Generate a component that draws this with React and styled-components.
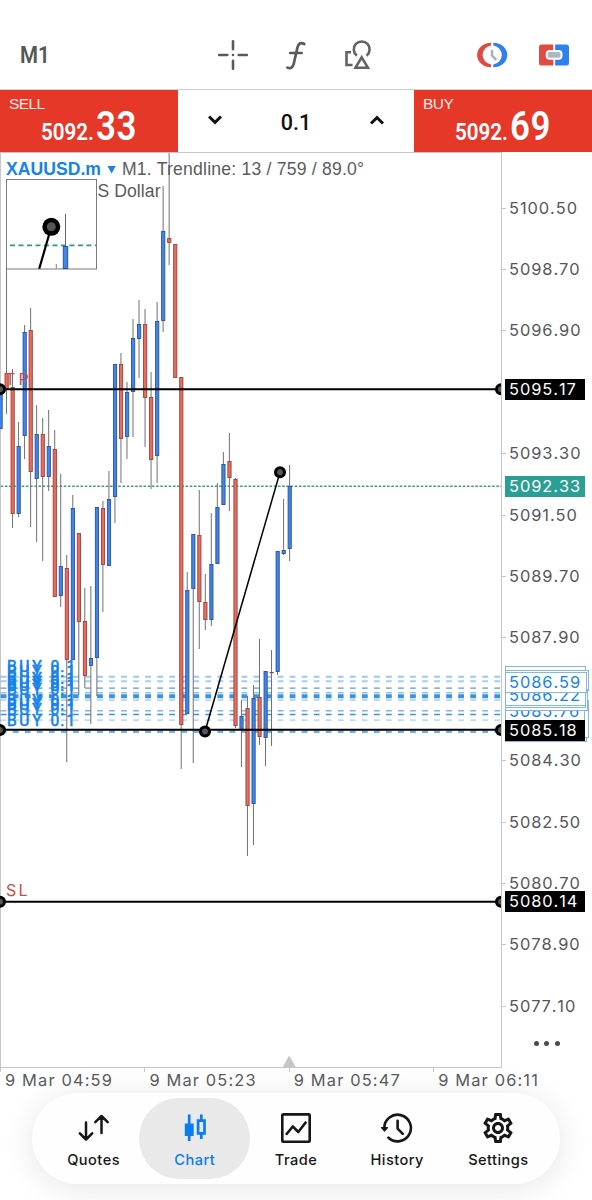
import React from "react";
import styled, { createGlobalStyle } from "styled-components";
import { MdOutlineSettings } from "react-icons/md";

const Global = createGlobalStyle`
  * { box-sizing: border-box; }
  body { margin: 0; background: #fff; }
`;

const Screen = styled.div`
  width: 592px;
  height: 1200px;
  overflow: hidden;
  display: flex;
  flex-direction: column;
  background: #fff;
  font-family: Inter, "Liberation Sans", sans-serif;
`;

/* ---------- toolbar ---------- */
const Toolbar = styled.header`
  height: 90px;
  flex: none;
  display: flex;
  align-items: center;
  padding: 20px 21px 0 20px;
  border-bottom: 1px solid #cfcfcf;
`;
const Timeframe = styled.div`
  width: 196px;
  font: 600 24.5px/30px Roboto, sans-serif;
  color: #555;
  transform: scaleX(0.84);
  transform-origin: left;
`;
const ToolGroup = styled.div`
  display: flex;
  align-items: center;
  gap: ${(p) => p.$gap}px;
  margin-left: ${(p) => p.$left || 0}px;
  svg { display: block; }
`;

/* ---------- one-click trading ---------- */
const TradePanel = styled.section`
  height: 62px;
  flex: none;
  display: flex;
`;
const QuoteButton = styled.div`
  width: 178px;
  padding: 5px 0 0 9px;
  background: #e53829;
  color: #fff;
`;
const Side = styled.div`
  font: 15.4px/18px "Liberation Sans", sans-serif;
  letter-spacing: -0.5px;
  color: #ffe9e4;
`;
const Price = styled.div`
  display: flex;
  align-items: baseline;
  height: 36px;
  margin-top: -8px;
  padding-left: 32px;
  font-family: Roboto, sans-serif;
  font-weight: 600;
`;
const PriceMain = styled.span`
  width: 54.5px;
  font-size: 23.8px;
  line-height: 42px;
  transform: scaleX(0.865);
  transform-origin: left;
  white-space: nowrap;
`;
const PricePips = styled.span`
  font-size: 41.5px;
  line-height: 42px;
  letter-spacing: 0.6px;
  transform: scaleX(0.84);
  transform-origin: left;
`;
const Volume = styled.div`
  flex: 1;
  display: flex;
  align-items: center;
  justify-content: space-between;
  padding: 0 28px 0 28px;
  font: 500 21.5px/30px Roboto, sans-serif;
  color: #111;
  span { margin-top: 3px; }
`;

/* ---------- chart ---------- */
const ChartArea = styled.main`
  height: 916px;
  flex: none;
  display: flex;
`;
const Plot = styled.svg`
  display: block;
  flex: none;
  border-top: 1px solid #c6c6c8;
  border-right: 1px solid #c6c6c8;
  border-bottom: 1px solid #c6c6c8;
`;
const PriceAxis = styled.div`
  position: relative;
  flex: 1;
  padding-top: 25.6px;
  font-size: 16.4px;
  letter-spacing: 0.95px;
  font-kerning: none;
`;
const AxisPrice = styled.div`
  height: 61.4px;
  display: flex;
  align-items: flex-start;
  line-height: 61.4px;
  color: #55565a;
  visibility: ${(p) => (p.$covered ? "hidden" : "visible")};
  &::before {
    content: "";
    width: 4px;
    height: 1px;
    margin: 30px 3px 0 0;
    background: #c6c6c8;
  }
`;
const Tag = styled.div`
  position: absolute;
  left: 3px;
  top: ${(p) => p.$top}px;
  width: ${(p) => p.$w || 80}px;
  height: ${(p) => p.$h || 21}px;
  padding-left: ${(p) => (p.$outline ? 3 : 4)}px;
  line-height: ${(p) => (p.$outline ? 19 : 21)}px;
  color: ${(p) => p.$fg || "#fff"};
  background: ${(p) => p.$bg || (p.$outline ? "#fff" : "#000")};
  border: ${(p) => (p.$outline ? "1px solid #83b9dd" : "0")};
`;
const More = styled.div`
  position: absolute;
  left: 32px;
  top: 888.5px;
  display: flex;
  gap: 5.4px;
  i { width: 5px; height: 5px; border-radius: 50%; background: #4b4b4d; }
`;

const TimeAxis = styled.div`
  height: 24px;
  flex: none;
  display: flex;
`;
const TimeMark = styled.div`
  width: 144.4px;
  flex: none;
  display: flex;
  font-size: 16.4px;
  line-height: 25px;
  letter-spacing: 1.15px;
  font-kerning: none;
  white-space: nowrap;
  color: #5a5b5f;
  &::before {
    content: "";
    width: 1px;
    height: 4px;
    margin-right: 4px;
    background: #c6c6c8;
  }
`;

/* ---------- tab bar ---------- */
const TabBar = styled.nav`
  width: 528px;
  height: 91px;
  flex: none;
  margin: 1px 0 0 32px;
  padding: 5px 11px 5px;
  display: flex;
  border-radius: 46px;
  background: #fefefe;
  box-shadow: 0 4px 32px rgba(0, 0, 0, 0.1);
`;
const Tab = styled.div`
  flex: none;
  width: ${(p) => (p.$active ? 111 : 101.2)}px;
  margin: ${(p) => (p.$active ? "0 -4.9px" : 0)};
  padding-top: 15px;
  display: flex;
  flex-direction: column;
  align-items: center;
  border-radius: 40px;
  background: ${(p) => (p.$active ? "#e9e9ea" : "transparent")};
  color: ${(p) => (p.$active ? "#0a7cf0" : "#161616")};
  svg { display: block; flex: none; }
`;
const TabLabel = styled.span`
  margin-top: 8px;
  font-size: 14.6px;
  line-height: 18px;
  font-weight: 500;
  letter-spacing: 0.45px;
`;

const BLUE = "#1583ea";

// [top of wick, top of body, bottom of body, bottom of wick, direction]
const candles = [
  [389, 389, 429, 429, 1], [180, 373, 389, 414, 0], [369, 387, 514, 528, 0], [422, 446, 514, 517, 1],
  [325, 332, 436, 459, 1], [308, 330, 472, 527, 0], [405, 434, 479, 542, 1], [418, 434, 477, 561, 0],
  [410, 446, 477, 491, 1], [430, 449, 597, 597, 0], [474, 566, 596, 607, 1], [555, 568, 660, 762, 0],
  [495, 508, 660, 660, 1], [533, 533, 622, 695, 0], [588, 621, 676, 688, 0], [586, 658, 666, 724, 1],
  [507, 507, 658, 696, 1], [501, 508, 565, 612, 0], [471, 499, 566, 566, 1], [364, 364, 497, 523, 1],
  [353, 364, 439, 483, 0], [382, 392, 437, 459, 1], [319, 338, 392, 437, 1], [300, 324, 339, 378, 1],
  [309, 324, 398, 447, 0], [372, 397, 460, 489, 0], [302, 321, 456, 483, 1], [186, 231, 321, 332, 1],
  [153, 238, 243, 265, 0], [244, 244, 378, 378, 0], [377, 377, 725, 769, 0], [572, 590, 714, 714, 1],
  [534, 534, 589, 763, 1], [490, 535, 602, 649, 0], [574, 602, 620, 630, 0], [513, 564, 620, 626, 1],
  [483, 507, 564, 564, 1], [452, 464, 505, 505, 1], [433, 461, 478, 511, 0], [478, 479, 726, 728, 0],
  [700, 716, 730, 767, 1], [696, 708, 806, 856, 0], [685, 698, 804, 845, 1], [639, 697, 737, 745, 0],
  [671, 671, 738, 766, 1], [650, 672, 672.5, 746, 0], [551, 551, 672, 675, 1], [499, 550, 554, 555, 1],
  [465, 486, 549, 561, 1],
];

// [y, thickness, opacity] of the open positions
const positions = [
  [676.7, 2, 0.45], [681.2, 2, 0.4], [688.2, 1.2, 0.8], [692.7, 1.5, 0.5], [696.2, 4, 0.9],
  [700, 1.5, 0.4], [710.7, 1.5, 0.6], [714.6, 1.5, 0.9], [720.2, 1.2, 0.4], [731, 4, 0.65],
];
const positionLabels = [672, 676.5, 683.5, 688, 691, 695.2, 705.8, 710, 715.4, 726.4];

function Handle({ x, y, r = 6 }) {
  return (
    <g>
      <circle cx={x} cy={y} r={r} fill="#000" />
      <circle cx={x} cy={y} r={r / 2} fill="#56565a" />
    </g>
  );
}

function Candle({ x, data }) {
  const [wt, bt, bb, wb, up] = data;
  return (
    <g>
      <line x1={x} x2={x} y1={wt} y2={wb} stroke="#707070" strokeWidth="1" />
      <rect x={x - 1.5} y={bt + 0.5} width="3.2" height={Math.max(0.3, bb - bt - 1)}
        fill={up ? "#3f86ea" : "#ee6a5a"} stroke={up ? "#2a51a0" : "#93443c"} strokeWidth="0.9" />
    </g>
  );
}

function PriceChart() {
  return (
    <Plot width="502" height="916" viewBox="0 153 501 914" fontFamily="Inter, sans-serif">
      <line x1="0.5" x2="0.5" y1="152" y2="1067" stroke="#c6c6c8" />
      <path d="M282.7 1067 L289.2 1055.5 L295.7 1067 Z" fill="#c6c6c8" />

      {positions.map(([y, w, o]) => (
        <line key={y} x1="0.7" x2="501" y1={y} y2={y} stroke="#2588dc" strokeWidth={w}
          opacity={o} strokeDasharray="5.8 6.24" />
      ))}
      <line x1="0.7" x2="501" y1="486.3" y2="486.3" stroke="#35a093" strokeWidth="1.4" strokeDasharray="2.6 1.6" />

      {candles.map((c, i) => <Candle key={i} x={0.5 + 6.023 * i} data={c} />)}

      <g fontFamily="Roboto, sans-serif" fontSize="15.6" fill={BLUE} stroke={BLUE} strokeWidth="0.6">
        {positionLabels.map((y) => (
          <text key={y} x="7 19.3 32.3 44 50.6 60.3 66.5" y={y}>BUY 0.1</text>
        ))}
      </g>
      <g fontSize="16" fill="#cf4a42">
        <text x="5 18.5" y="384.5">TP</text>
        <text x="6 18.5" y="896">SL</text>
      </g>

      <g stroke="#000" strokeWidth="1.9">
        <line x1="0" x2="501" y1="389.3" y2="389.3" />
        <line x1="0" x2="501" y1="729.8" y2="729.8" />
        <line x1="0" x2="501" y1="901.7" y2="901.7" />
        <line x1="205" x2="280" y1="731.5" y2="472.3" strokeWidth="1.5" />
      </g>
      <Handle x={0} y={389.3} />
      <Handle x={501} y={389.3} />
      <Handle x={0} y={730} />
      <Handle x={501} y={730} />
      <Handle x={0} y={901.7} />
      <Handle x={501} y={901.7} />
      <Handle x={205} y={731.5} />
      <Handle x={280} y={472.3} />

      <g fontFamily="Liberation Sans, sans-serif" fontSize="17.6" fill="#5b5c60">
        <text x="6" y="174.8" fontWeight="700" fill={BLUE} textLength="95">XAUUSD.m</text>
        <path d="M107.5 166 H115.8 L111.6 173.5 Z" fill={BLUE} />
        <text x="122" y="174.8" textLength="242">M1. Trendline: 13 / 759 / 89.0°</text>
        <text x="97.5" y="196.6" textLength="63">S Dollar</text>
      </g>

      <rect x="6.5" y="179.5" width="90" height="89.5" fill="#fff" stroke="#7b7b7b" />
      <line x1="10" x2="96" y1="245.3" y2="245.3" stroke="#2b9a86" strokeWidth="1.8" strokeDasharray="5 3.5" />
      <line x1="56.3" x2="56.3" y1="264" y2="268.5" stroke="#777" />
      <line x1="65.5" x2="65.5" y1="214" y2="247" stroke="#666" />
      <rect x="63.3" y="246.5" width="4.4" height="22" fill="#3f86ea" stroke="#2a51a0" />
      <line x1="51.3" x2="39.2" y1="227" y2="268.8" stroke="#000" strokeWidth="2.2" />
      <Handle x={51.3} y={226.8} r={9} />
    </Plot>
  );
}

// empty marks lie behind price tags
const axisPrices = [
  "5100.50", "5098.70", "5096.90", "", "5093.30", "5091.50", "5089.70",
  "5087.90", "", "5084.30", "5082.50", "5080.70", "5078.90", "5077.10",
];

const icons = {
  Quotes: (
    <svg width="36" height="30" viewBox="0 0 36 30" fill="none" stroke="currentColor" strokeWidth="2.5" strokeLinecap="round" strokeLinejoin="round">
      <path d="M10 9.5V26.5M3.8 20.3L10 26.5L16.2 20.3M25.5 20V3M19.3 9.2L25.5 3L31.7 9.2" />
    </svg>
  ),
  Chart: (
    <svg width="30" height="30" viewBox="0 0 30 30" fill="none" stroke="currentColor" strokeWidth="2.7">
      <path d="M9.2 1.5V28M21.3 1.5V7.5M21.3 20.5V26" />
      <path d="M4.8 10.5H13.7V23H4.8Z" fill="currentColor" stroke="none" />
      <path d="M18.1 7.6H24.5V20.4H18.1Z" />
    </svg>
  ),
  Trade: (
    <svg width="32" height="30" viewBox="0 0 32 30" fill="none" stroke="currentColor" strokeWidth="2.6" strokeLinejoin="round">
      <rect x="2.3" y="1.4" width="27.4" height="27.3" rx="1" />
      <path d="M6 21.8L12.8 13.5L18.3 19L26.2 8.8" />
    </svg>
  ),
  History: (
    <svg width="34" height="30" viewBox="0 0 34 30" fill="none" stroke="currentColor" strokeWidth="2.6" strokeLinecap="round" strokeLinejoin="round">
      <path d="M4.3 15A13.3 13.3 0 1 1 8.5 24.7" />
      <path d="M17.6 7.8V15.6L22.8 20.8" />
      <path d="M1.5 14.5H7.5L4.5 18Z" fill="currentColor" strokeWidth="1.2" />
    </svg>
  ),
  Settings: <MdOutlineSettings size={36} style={{ margin: "-3px 0" }} />,
};

function Quote({ side, main, pips }) {
  return (
    <QuoteButton>
      <Side>{side}</Side>
      <Price>
        <PriceMain>{main}</PriceMain>
        <PricePips>{pips}</PricePips>
      </Price>
    </QuoteButton>
  );
}

export default function App() {
  return (
    <Screen>
      <Global />
      <Toolbar>
        <Timeframe>M1</Timeframe>
        <ToolGroup $gap={30}>
          <svg width="34" height="32" viewBox="0 0 34 32" stroke="#595959" strokeWidth="2.6" strokeLinecap="round">
            <path d="M17 2.2V10.3M17 21.7V29.8M3.2 16H11.3M22.7 16H30.8M17 16H17.01" />
          </svg>
          <svg width="32" height="32" viewBox="0 0 32 32" fill="none" stroke="#595959" strokeWidth="2.7" strokeLinecap="round">
            <path d="M24.3 5C20.8 2.8 18.3 4.6 17.4 8.8L13.8 24.5C12.9 28.4 10.6 30.2 7.4 28.6M10.2 14H21.6" />
          </svg>
          <svg width="32" height="32" viewBox="0 0 32 32" fill="none" stroke="#636363" strokeWidth="2.6">
            <path d="M9 13.2H4.5V26H10.5" />
            <path d="M14.9 16.6A7.9 7.9 0 1 1 24.5 16.6" />
            <path d="M19.7 18.3L25.9 28.7H13.5Z" />
          </svg>
        </ToolGroup>
        <ToolGroup $gap={30} $left={102}>
          <svg width="32" height="28" viewBox="0 0 32 28">
            <path d="M15.1 1.8A14 12.2 0 0 0 15.1 26.2V23.6A9.9 9.7 0 0 1 15.1 4.4Z" fill="#e04a41" />
            <path d="M17.3 1.8A14 12.2 0 0 1 17.3 26.2V23.6A9.9 9.7 0 0 0 17.3 4.4Z" fill="#2f80ec" />
            <path d="M16 8.8V14.4L20.2 18.8" fill="none" stroke="#abb1b7" strokeWidth="2.5" />
          </svg>
          <svg width="32" height="28" viewBox="0 0 32 28">
            <path d="M15.2 3.5H3.5Q1 3.5 1 6V22Q1 24.5 3.5 24.5H15.2Z" fill="#e04a41" />
            <path d="M17.2 3.5H28.8Q31 3.5 31 6V22Q31 24.5 28.8 24.5H17.2Z" fill="#2f80ec" />
            <rect x="8.7" y="10" width="14.8" height="7.8" rx="3" fill="#abb8c4" stroke="#fff" strokeWidth="2" />
          </svg>
        </ToolGroup>
      </Toolbar>

      <TradePanel>
        <Quote side="SELL" main="5092." pips="33" />
        <Volume>
          <svg width="18" height="12" viewBox="0 0 18 12" fill="none" stroke="#111" strokeWidth="3">
            <path d="M3 1.5L9 7.3L15 1.5" />
          </svg>
          <span>0.1</span>
          <svg width="18" height="12" viewBox="0 0 18 12" fill="none" stroke="#111" strokeWidth="3">
            <path d="M3 8.5L9 2.7L15 8.5" />
          </svg>
        </Volume>
        <Quote side="BUY" main="5092." pips="69" />
      </TradePanel>

      <ChartArea>
        <PriceChart />
        <PriceAxis>
          {axisPrices.map((p, i) => (
            <AxisPrice key={i} $covered={!p}>{p}</AxisPrice>
          ))}
          <Tag $top={227.3}>5095.17</Tag>
          <Tag $top={324.3} $bg="#2a9f93">5092.33</Tag>
          <Tag $top={568} $w={82} $h={22} $outline />
          <Tag $top={514} $w={81} $h={20} $outline />
          <Tag $top={518} $w={84} $h={21} $outline />
          <Tag $top={548} $w={84} $h={38} $outline />
          <Tag $top={548.5} $w={80} $h={21} $outline $fg={BLUE}>5085.76</Tag>
          <Tag $top={537} $w={83} $h={22} $outline />
          <Tag $top={536} $w={81} $h={20} $outline />
          <Tag $top={533} $w={81} $h={21} $outline $fg={BLUE}>5086.22</Tag>
          <Tag $top={520} $w={82} $h={21} $outline $fg={BLUE}>5086.59</Tag>
          <Tag $top={567.5}>5085.18</Tag>
          <Tag $top={739}>5080.14</Tag>
          <More><i /><i /><i /></More>
        </PriceAxis>
      </ChartArea>

      <TimeAxis>
        {["9 Mar 04:59", "9 Mar 05:23", "9 Mar 05:47", "9 Mar 06:11"].map((t) => (
          <TimeMark key={t}>{t}</TimeMark>
        ))}
      </TimeAxis>

      <TabBar>
        {Object.keys(icons).map((name) => (
          <Tab key={name} $active={name === "Chart"}>
            {icons[name]}
            <TabLabel>{name}</TabLabel>
          </Tab>
        ))}
      </TabBar>
    </Screen>
  );
}
